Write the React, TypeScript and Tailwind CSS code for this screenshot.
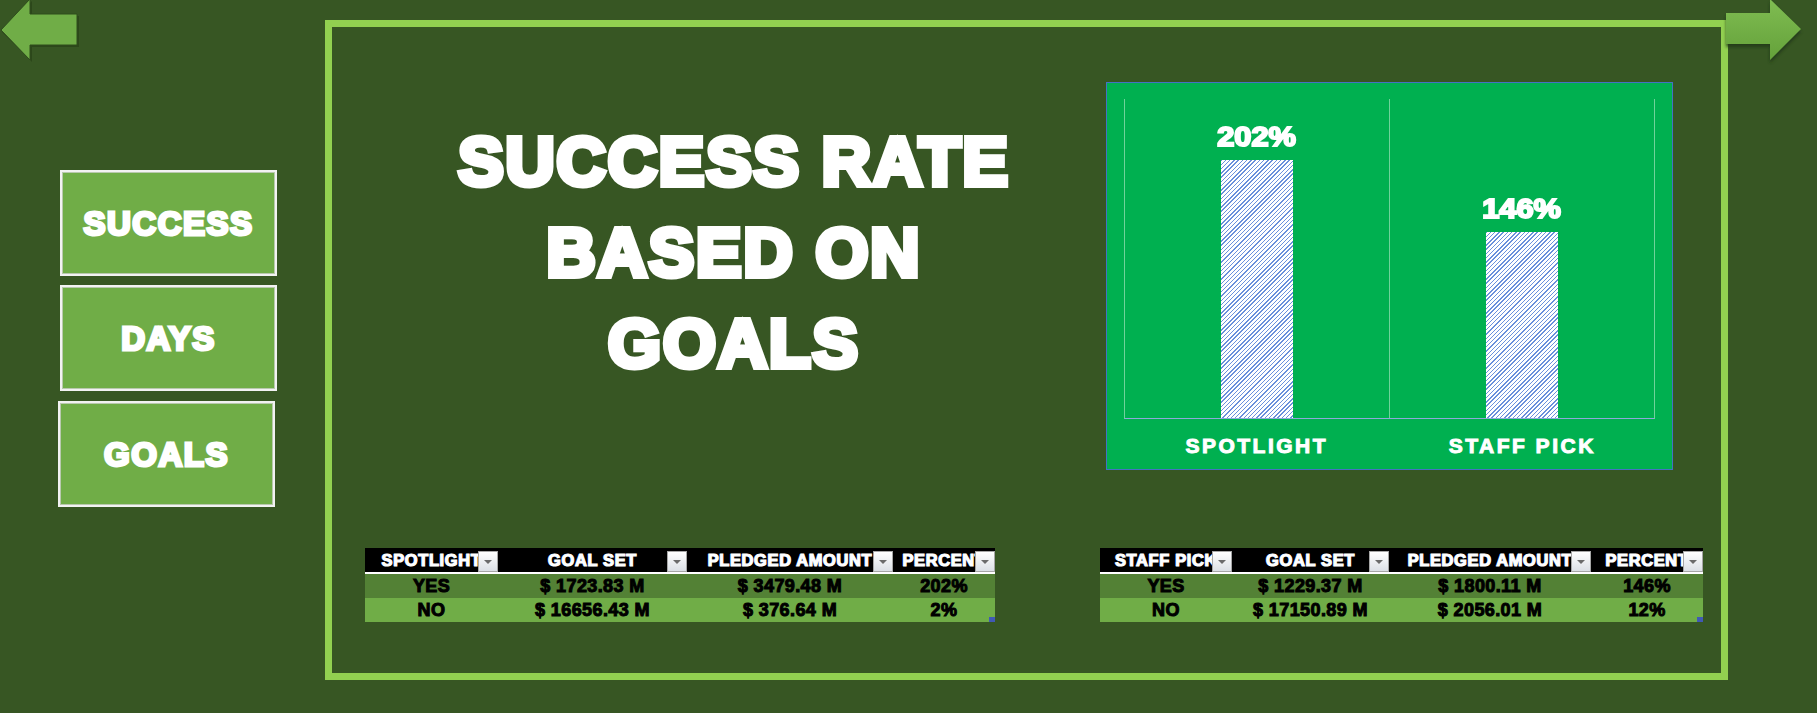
import React from "react"

type Bar = { label: string; value: number }
type TableData = { cols: number[]; head: string[]; rows: string[][] }

const AXIS_MAX = 250
const PLOT_H = 319

const bars: Bar[] = [
  { label: "SPOTLIGHT", value: 202 },
  { label: "STAFF PICK", value: 146 },
]

const tables: TableData[] = [
  {
    cols: [133, 189, 206, 102],
    head: ["SPOTLIGHT", "GOAL SET", "PLEDGED AMOUNT", "PERCENT"],
    rows: [
      ["YES", "$ 1723.83 M", "$ 3479.48 M", "202%"],
      ["NO", "$ 16656.43 M", "$ 376.64 M", "2%"],
    ],
  },
  {
    cols: [132, 157, 202, 112],
    head: ["STAFF PICK", "GOAL SET", "PLEDGED AMOUNT", "PERCENT"],
    rows: [
      ["YES", "$ 1229.37 M", "$ 1800.11 M", "146%"],
      ["NO", "$ 17150.89 M", "$ 2056.01 M", "12%"],
    ],
  },
]

function NavButton({ label, className = "" }: { label: string; className?: string }) {
  return (
    <div
      className={`flex h-[106px] w-[217px] items-center justify-center border-2 border-[#f2f2f2] bg-[#70ad47] shadow-[inset_0_0_0_1px_#b9c9ae] ${className}`}
    >
      <span className="text-[33px] leading-none font-bold tracking-[1.5px] text-white [-webkit-text-stroke:3px_white]">
        {label}
      </span>
    </div>
  )
}

function FilterButton() {
  return (
    <span className="absolute top-[3px] right-0 flex h-[21px] w-[20px] items-center justify-center border border-[#a6a6a6] bg-linear-to-b from-white to-[#dce0e6]">
      <span className="mt-[1px] h-0 w-0 border-x-[4px] border-t-[4px] border-x-transparent border-t-[#6b6b6b]" />
    </span>
  )
}

function DataTable({ data }: { data: TableData }) {
  const grid = { gridTemplateColumns: data.cols.map((c) => `${c}px`).join(" ") }
  return (
    <div className="relative" style={{ width: data.cols.reduce((a, b) => a + b, 0) }}>
      <div className="grid h-[24px] bg-black" style={grid}>
        {data.head.map((h) => (
          <div key={h} className="relative flex items-center justify-center overflow-hidden">
            <span className="text-[16.5px] leading-none font-bold tracking-[0.6px] whitespace-nowrap text-white [-webkit-text-stroke:1.1px_white] [text-shadow:-1px_0_0_rgba(90,130,255,0.6)]">
              {h}
            </span>
            <FilterButton />
          </div>
        ))}
      </div>
      <div className="h-[2px] bg-white" />
      {data.rows.map((row, i) => (
        <div key={i} className={`grid h-[24px] ${i === 0 ? "bg-[#538135]" : "bg-[#70ad47]"}`} style={grid}>
          {row.map((cell, j) => (
            <div key={j} className="flex items-center justify-center">
              <span className="text-[18px] leading-none font-bold tracking-[0.4px] whitespace-nowrap text-black [-webkit-text-stroke:1px_black]">
                {cell}
              </span>
            </div>
          ))}
        </div>
      ))}
      <span className="absolute right-0 bottom-0 h-[5px] w-[6px] bg-[#4059b5]" />
    </div>
  )
}

function Chart() {
  return (
    <div className="h-[388px] w-[567px] border border-[#4472c4] bg-[#00b050] px-[17px] pt-[16px]">
      <div className="flex h-[320px] border-x border-b border-x-[#6fd39a] border-b-[#8ea9db]">
        {bars.map((b, i) => (
          <div
            key={b.label}
            className={`flex flex-1 flex-col items-center justify-end ${i === 0 ? "border-r border-[#6fd39a]" : ""}`}
          >
            <span className="mb-[9px] inline-block scale-x-[1.14] text-[27px] leading-[27px] font-bold text-white [-webkit-text-stroke:2px_white]">
              {b.value}%
            </span>
            <div
              className="w-[72px] bg-[repeating-linear-gradient(135deg,#6a90dc_0px,#6a90dc_1px,#ffffff_1px,#ffffff_3px)]"
              style={{ height: (b.value / AXIS_MAX) * PLOT_H }}
            />
          </div>
        ))}
      </div>
      <div className="mt-[16px] flex">
        {bars.map((b) => (
          <div key={b.label} className="flex flex-1 justify-center">
            <span className="text-[21px] leading-[21px] font-bold tracking-[2.5px] whitespace-nowrap text-white [-webkit-text-stroke:1px_white]">
              {b.label}
            </span>
          </div>
        ))}
      </div>
    </div>
  )
}

function LeftArrow() {
  return (
    <svg className="absolute top-0 left-0" width="84" height="66" viewBox="0 0 84 66">
      <polygon points="2,32 32,1 32,16 79,16 79,47 32,47 32,62" fill="#2a4419" opacity="0.85" />
      <polygon points="1,30 30,-1 30,14 77,14 77,45 30,45 30,60" fill="#70ad47" stroke="#2e4d1d" strokeWidth="1" />
    </svg>
  )
}

function RightArrow() {
  return (
    <svg className="absolute top-0 left-[1720px]" width="92" height="68" viewBox="0 0 92 68">
      <defs>
        <linearGradient id="ra" x1="0" y1="0" x2="0" y2="1">
          <stop offset="0" stopColor="#80bd52" />
          <stop offset="1" stopColor="#64a13a" />
        </linearGradient>
        <filter id="rs" x="-20%" y="-20%" width="140%" height="140%">
          <feGaussianBlur stdDeviation="1.5" />
        </filter>
      </defs>
      <polygon points="6,16 50,16 50,2 81,32 50,63 50,47 6,47" fill="#1f3512" opacity="0.75" filter="url(#rs)" />
      <polygon points="6,13 50,13 50,-1 81,29 50,60 50,44 6,44" fill="url(#ra)" />
    </svg>
  )
}

export default function App() {
  return (
    <div className="relative flex h-[713px] w-full overflow-hidden bg-[#375623] pt-[20px] [font-family:'Liberation_Sans',Arial,sans-serif]">
      <div className="flex w-[325px] shrink-0 flex-col gap-[9px] pt-[150px] pl-[60px]">
        <NavButton label="SUCCESS" />
        <NavButton label="DAYS" />
        <NavButton label="GOALS" className="mt-[1px] -ml-[2px]" />
      </div>

      <div className="flex h-[660px] w-[1403px] shrink-0 flex-col border-[7px] border-[#92d050]">
        <div className="flex items-start">
          <div className="w-[774px] shrink-0 pt-[89px] pl-[30px]">
            <div className="text-center text-[68px] leading-[91px] font-bold tracking-[2px] whitespace-nowrap text-white [-webkit-text-stroke:6px_white]">
              SUCCESS RATE
              <br />
              BASED ON
              <br />
              GOALS
            </div>
          </div>
          <div className="mt-[55px]">
            <Chart />
          </div>
        </div>

        <div className="mt-[78px] flex gap-[105px] pl-[33px]">
          {tables.map((t) => (
            <DataTable key={t.head[0]} data={t} />
          ))}
        </div>
      </div>

      <LeftArrow />
      <RightArrow />
    </div>
  )
}
